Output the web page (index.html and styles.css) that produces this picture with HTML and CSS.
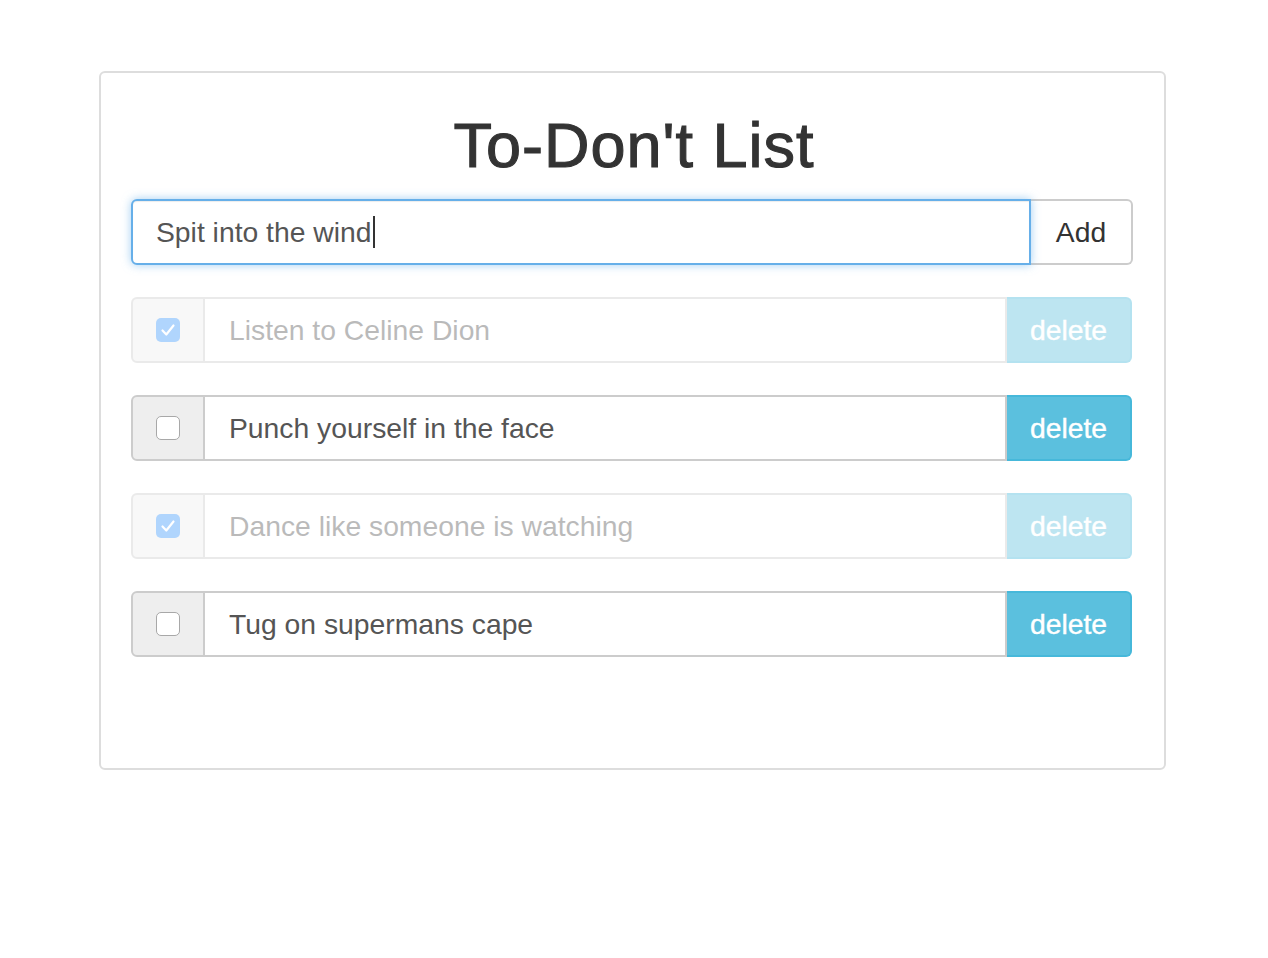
FILE: index.html
```html
<!DOCTYPE html>
<html>
<head>
<meta charset="utf-8">
<title>To-Don't List</title>
<link rel="stylesheet" href="styles.css">
</head>
<body>
<div class="card">
  <h1 class="title">To-Don't List</h1>
  <div class="new-row">
    <div class="new-input">Spit into the wind<span class="caret"></span></div>
    <div class="add-btn">Add</div>
  </div>
  <ul class="list">
    <li class="item done">
      <div class="addon"><span class="chk checked"><svg viewBox="0 0 24 24" width="24" height="24"><path d="M6.5 12.5 L10.3 16.5 L17.5 7.5" fill="none" stroke="#fff" stroke-width="2.2" stroke-linecap="round" stroke-linejoin="round"/></svg></span></div>
      <div class="text">Listen to Celine Dion</div>
      <div class="del">delete</div>
    </li>
    <li class="item">
      <div class="addon"><span class="chk"></span></div>
      <div class="text">Punch yourself in the face</div>
      <div class="del">delete</div>
    </li>
    <li class="item done">
      <div class="addon"><span class="chk checked"><svg viewBox="0 0 24 24" width="24" height="24"><path d="M6.5 12.5 L10.3 16.5 L17.5 7.5" fill="none" stroke="#fff" stroke-width="2.2" stroke-linecap="round" stroke-linejoin="round"/></svg></span></div>
      <div class="text">Dance like someone is watching</div>
      <div class="del">delete</div>
    </li>
    <li class="item">
      <div class="addon"><span class="chk"></span></div>
      <div class="text">Tug on supermans cape</div>
      <div class="del">delete</div>
    </li>
  </ul>
</div>
</body>
</html>
```
FILE: styles.css
```css
* { box-sizing: border-box; }
body {
  margin: 0;
  background: #fff;
  font-family: "Liberation Sans", Arial, sans-serif;
  color: #333;
}
.card {
  margin: 71px 0 0 99px;
  width: 1067px;
  height: 699px;
  border: 2px solid #ddd;
  border-radius: 6px;
  padding: 37px 30px 30px 30px;
}
.title {
  margin: 0 0 19px 0;
  font-size: 63px;
  font-weight: normal;
  line-height: 70px;
  letter-spacing: 1px;
  text-align: center;
  color: #333;
  -webkit-text-stroke: 1.1px #333;
  padding-left: 3px;
}
.new-row {
  display: flex;
  height: 66px;
  width: 1002px;
}
.new-input {
  flex: 1;
  display: flex;
  align-items: center;
  padding-left: 23px;
  border: 2px solid #66afe9;
  border-radius: 6px 0 0 6px;
  box-shadow: inset 0 1px 1px rgba(0,0,0,.075), 0 0 10px rgba(102,175,233,.6);
  font-size: 28.3px;
  color: #555;
  position: relative;
  z-index: 1;
  background: #fff;
}
.caret {
  display: inline-block;
  width: 2px;
  height: 32px;
  background: #333;
  margin-left: 1px;
}
.add-btn {
  width: 102px;
  display: flex;
  align-items: center;
  justify-content: center;
  border: 2px solid #ccc;
  border-left: none;
  border-radius: 0 6px 6px 0;
  font-size: 28.3px;
  color: #333;
  background: #fff;
}
.list {
  list-style: none;
  margin: 32px 0 0 0;
  padding: 0;
  width: 1001px;
  display: flex;
  flex-direction: column;
  gap: 32px;
}
.item {
  display: flex;
  height: 66px;
}
.item.done { opacity: 0.4; }
.addon {
  width: 74px;
  background: #eee;
  border: 2px solid #ccc;
  border-radius: 6px 0 0 6px;
  display: flex;
  align-items: center;
  justify-content: center;
}
.chk {
  width: 24px;
  height: 24px;
  border: 1px solid #a8a8a8;
  border-radius: 5px;
  background: #fff;
  display: block;
}
.chk.checked {
  border: none;
  background: #3d97fb;
}
.chk svg { display: block; }
.text {
  flex: 1;
  border-top: 2px solid #ccc;
  border-bottom: 2px solid #ccc;
  border-right: 2px solid #ccc;
  display: flex;
  align-items: center;
  padding-left: 24px;
  font-size: 28.3px;
  color: #555;
  background: #fff;
}
.del {
  width: 125px;
  background: #5bc0de;
  border: 2px solid #46b8da;
  border-left: none;
  border-radius: 0 6px 6px 0;
  color: #fff;
  font-size: 28.3px;
  -webkit-text-stroke: 0.4px #fff;
  display: flex;
  align-items: center;
  justify-content: center;
}
```
